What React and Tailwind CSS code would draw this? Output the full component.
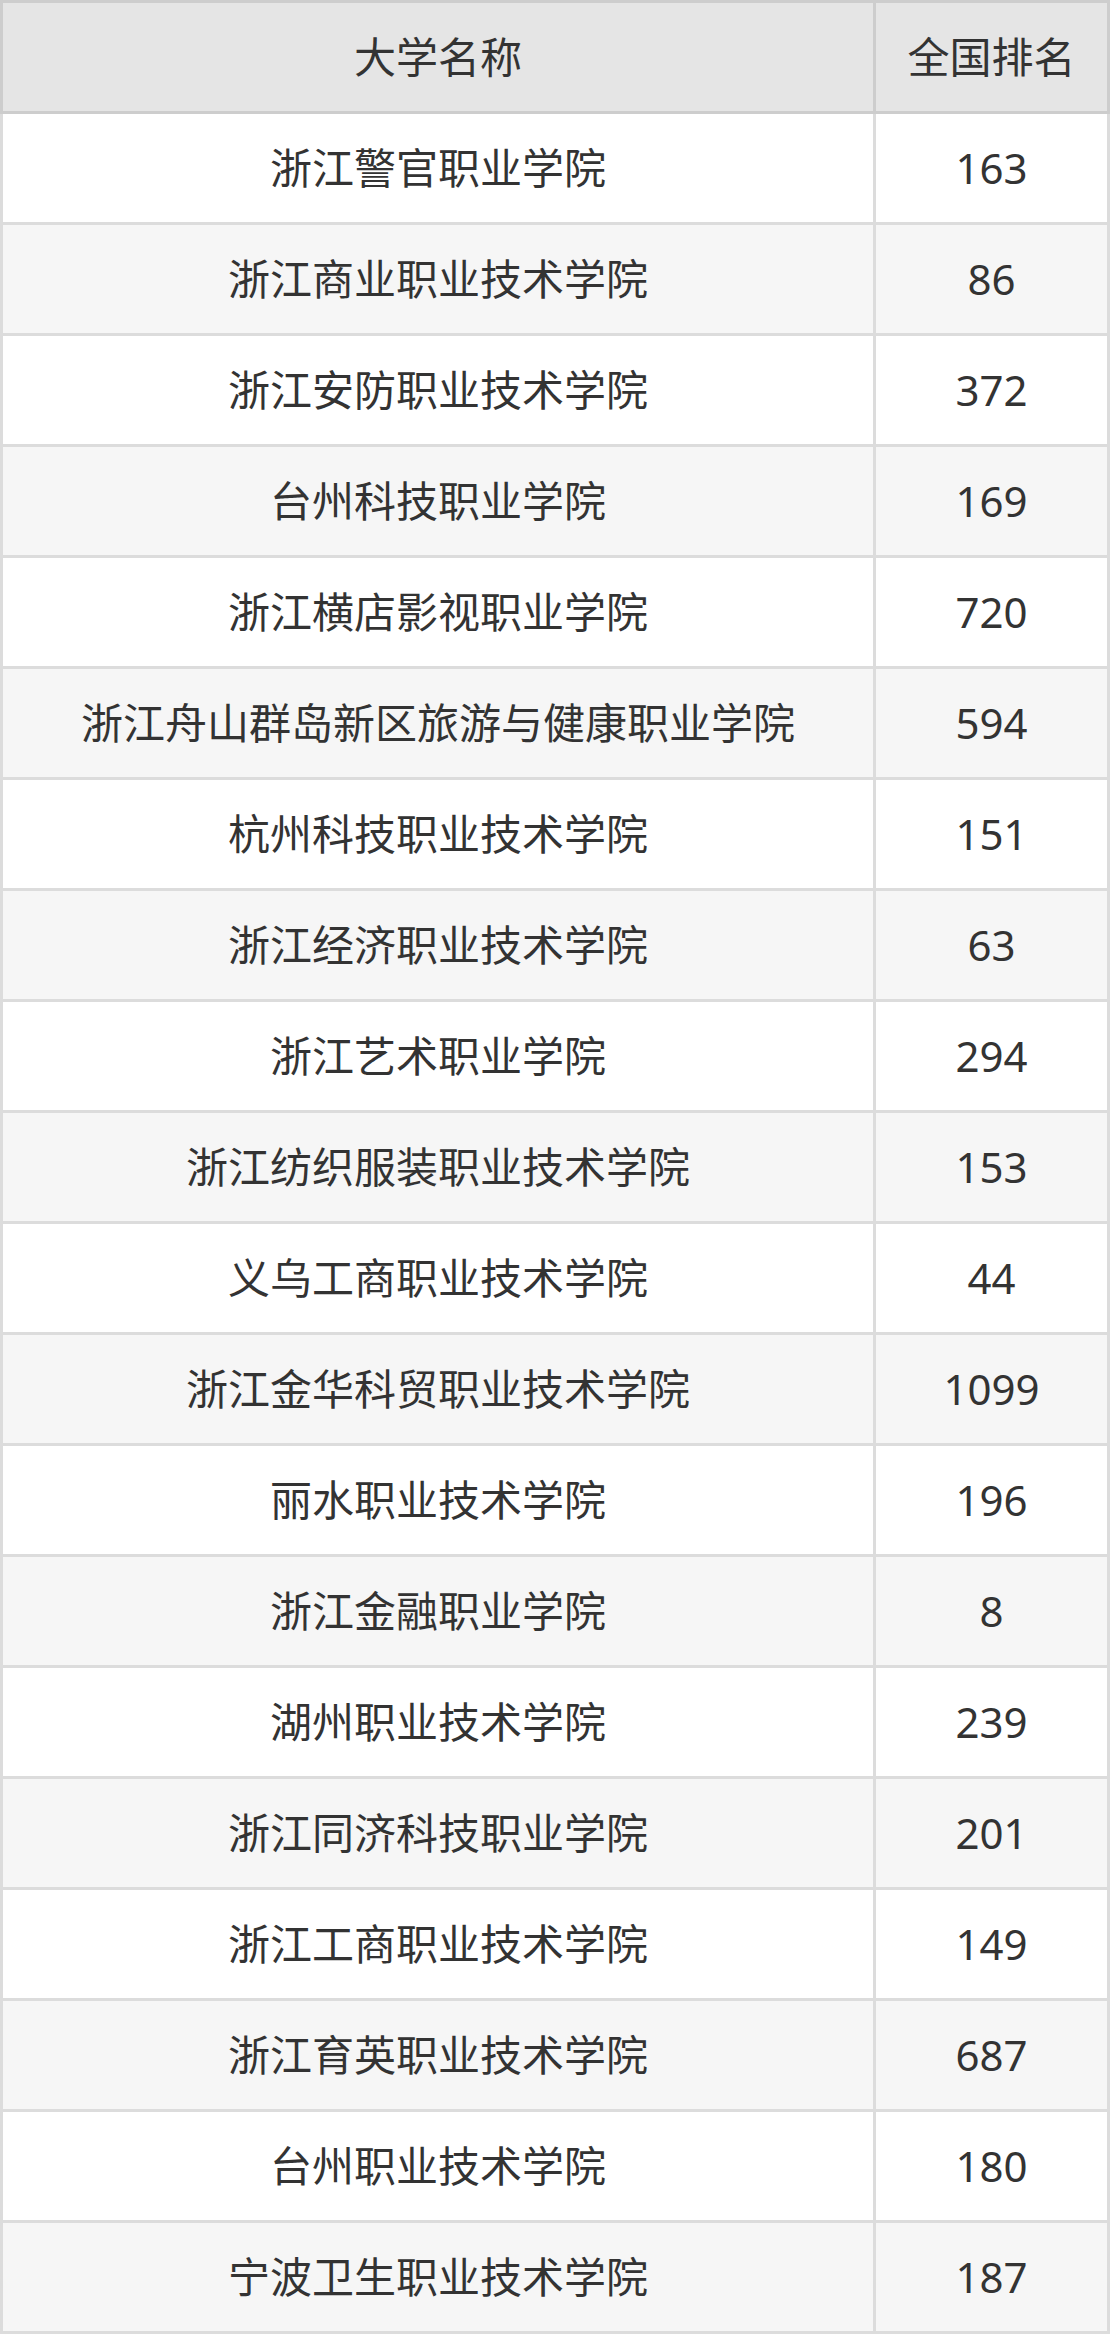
import React from 'react';

const rows = [
  ['浙江警官职业学院', '163'],
  ['浙江商业职业技术学院', '86'],
  ['浙江安防职业技术学院', '372'],
  ['台州科技职业学院', '169'],
  ['浙江横店影视职业学院', '720'],
  ['浙江舟山群岛新区旅游与健康职业学院', '594'],
  ['杭州科技职业技术学院', '151'],
  ['浙江经济职业技术学院', '63'],
  ['浙江艺术职业学院', '294'],
  ['浙江纺织服装职业技术学院', '153'],
  ['义乌工商职业技术学院', '44'],
  ['浙江金华科贸职业技术学院', '1099'],
  ['丽水职业技术学院', '196'],
  ['浙江金融职业学院', '8'],
  ['湖州职业技术学院', '239'],
  ['浙江同济科技职业学院', '201'],
  ['浙江工商职业技术学院', '149'],
  ['浙江育英职业技术学院', '687'],
  ['台州职业技术学院', '180'],
  ['宁波卫生职业技术学院', '187'],
];

const App = () => {
  return (
    <div
      className="w-[1110px] bg-white text-[#333] text-[42px] leading-none"
      style={{ fontFamily: '"Noto Sans", "Noto Sans CJK SC", sans-serif' }}
    >
      <table className="w-full border-collapse border-[3px] border-[#dcdcdc] table-fixed">
        <colgroup>
          <col className="w-[873px]" />
          <col />
        </colgroup>
        <thead>
          <tr className="bg-[#e5e5e5]">
            <th className="h-[111px] border-[3px] border-[#cdcdcd] font-normal text-center">大学名称</th>
            <th className="h-[111px] border-[3px] border-[#cdcdcd] font-normal text-center">全国排名</th>
          </tr>
        </thead>
        <tbody>
          {rows.map(([name, rank], i) => (
            <tr key={name} className={i % 2 === 1 ? 'bg-[#f6f6f6]' : 'bg-white'}>
              <td className="h-[111px] border-[3px] border-[#dcdcdc] text-center">{name}</td>
              <td className="h-[111px] border-[3px] border-[#dcdcdc] text-center">{rank}</td>
            </tr>
          ))}
        </tbody>
      </table>
    </div>
  );
};

export default App;
